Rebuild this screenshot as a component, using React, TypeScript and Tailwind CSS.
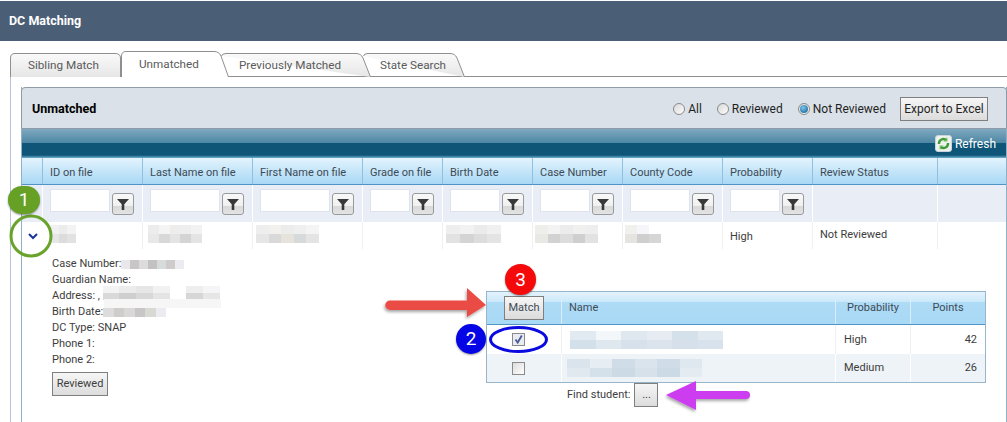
import type { FC } from 'react';

const columns = [
  { title: 'ID on file', input: 'w-[60px]', blur: { w: 'w-[26px]', top: ['#f1f1f1', '#ececec', '#f3f3f3'], bottom: ['#e6e6e6', '#dcdcdc', '#e2e2e2'] }, blurPad: 'pl-[7px]' },
  { title: 'Last Name on file', input: 'w-[70px]', blur: { w: 'w-[54px]', top: ['#ececec', '#f4f4f4', '#efedeb', '#eeeeee', '#f2f2f2'], bottom: ['#e8e8e8', '#d8d8d8', '#e4e4e4', '#d4d4d4', '#e4e4e4'] }, blurPad: 'pl-[5px]' },
  { title: 'First Name on file', input: 'w-[70px]', blur: { w: 'w-[63px]', top: ['#eeeeee', '#f3f1ee', '#ececec', '#efefef', '#f4f4f4'], bottom: ['#e6e6e6', '#d9d9d9', '#e6e2dc', '#d6dadb', '#e4e4e4'] }, blurPad: 'pl-[3px]' },
  { title: 'Grade on file', input: 'w-[40px]' },
  { title: 'Birth Date', input: 'w-[50px]', blur: { w: 'w-[55px]', top: ['#eeeeee', '#f2f2f2', '#ebebeb', '#f0f0f0'], bottom: ['#e2e2e2', '#d4d4d4', '#dddddd', '#e4e4e4'] }, blurPad: 'pl-[3px]' },
  { title: 'Case Number', input: 'w-[50px]', blur: { w: 'w-[63px]', top: ['#eeeeea', '#f3f3f3', '#ececec', '#f0f0ee', '#eeeeee'], bottom: ['#e8e8e4', '#d2d2d2', '#dcdcdc', '#cfcfcf', '#e2e2e2'] }, blurPad: 'pl-[2px]' },
  { title: 'County Code', input: 'w-[60px]', blur: { w: 'w-[36px]', top: ['#f0f0ee', '#f6f6fa', '#ffffff'], bottom: ['#e6e4e0', '#cfcfcf', '#d6d6d6'] }, blurPad: 'pl-[2px]' },
  { title: 'Probability', input: 'w-[50px]' },
  { title: 'Review Status' },
  { title: '' },
];

const gridCols = 'grid grid-cols-[21px_100px_110px_110px_80px_90px_90px_100px_90px_125px_1fr]';

type BlurProps = { w: string; h?: string; top: string[]; bottom: string[]; className?: string };

// pixelated stand-in for redacted values
const Blur: FC<BlurProps> = ({ w, h = 'h-[18px]', top, bottom, className }) => (
  <div className={`flex flex-col ${w} ${h} ${className ?? ''}`}>
    {[top, bottom].map((row, r) => (
      <div key={r} className="flex flex-1">
        {row.map((c, i) => (
          <div key={i} className="flex-1" style={{ backgroundColor: c }} />
        ))}
      </div>
    ))}
  </div>
);

const FilterButton: FC = () => (
  <div className="mt-[4px] ml-[2px] flex h-[22px] w-[22px] items-center justify-center rounded-[3px] border border-[#9a9a9a] bg-[linear-gradient(#f8f8f8_0%,#f0f0f0_60%,#d8d8d8_61%,#e4e4e4_100%)]">
    <svg width="14" height="14" viewBox="0 0 14 14">
      <path d="M1 2h12L8.3 7.2V13H5.7V7.2z" fill="#383838" />
    </svg>
  </div>
);

const Radio: FC<{ label: string; checked?: boolean; className?: string }> = ({ label, checked, className }) => (
  <div className={`flex items-center gap-[3px] ${className ?? ''}`}>
    <div className="flex h-[12px] w-[12px] items-center justify-center rounded-full border border-[#8a8a8a] bg-[linear-gradient(135deg,#d8d8d8,#fdfdfd)]">
      {checked && <div className="h-[8px] w-[8px] rounded-full bg-[radial-gradient(circle_at_40%_35%,#7cc4ec,#0b5a8f)]" />}
    </div>
    <span>{label}</span>
  </div>
);

const Tab: FC<{ label: string; d: string; active?: boolean; className: string; textClass: string }> = ({ label, d, active, className, textClass }) => (
  <div className={`relative ${className}`}>
    <svg className="absolute inset-0 h-full w-full" preserveAspectRatio="none">
      <defs>
        <linearGradient id="tabfill" x1="0" y1="0" x2="0" y2="1">
          <stop offset="0" stopColor="#fafafa" />
          <stop offset="1" stopColor="#e6e6e6" />
        </linearGradient>
      </defs>
      <path d={d} fill={active ? '#ffffff' : 'url(#tabfill)'} stroke="#8f8f8f" />
    </svg>
    <span className={`absolute ${textClass}`}>{label}</span>
  </div>
);

const PlainButton: FC<{ label: string; className: string }> = ({ label, className }) => (
  <div className={`flex items-center justify-center border border-[#7f7f7f] bg-[linear-gradient(#f6f6f6,#dcdcdc)] ${className}`}>{label}</div>
);

const Detail: FC = () => (
  <div className="ml-[30px] flex w-[340px] shrink-0 flex-col pt-[7px] text-[11px] text-[#3d3d3d]">
    <div className="flex h-[16px] items-center">Case Number:<Blur w="w-[63px]" h="h-[9px]" top={['#e8e8ec', '#c9c6c6', '#dcdcdc', '#c4c1c1', '#d8dbdb', '#cfcbcb', '#ebebf0']} bottom={['#e8e8ec', '#c9c6c6', '#dcdcdc', '#c4c1c1', '#d8dbdb', '#cfcbcb', '#ebebf0']} /></div>
    <div className="flex h-[16px] items-center">Guardian Name:</div>
    <div className="relative flex h-[16px] items-center">
      Address: ,&nbsp;
      <Blur w="w-[117px]" h="h-[14px]" className="mb-[7px]" top={['#f3f3f3', '#ececec', '#e6e6e6', '#f1f1f1', '#ffffff', '#eeeeee', '#f5f5f8']} bottom={['#d9d9d9', '#cfcfcf', '#d8d8d8', '#e4e4e4', '#ffffff', '#d6d6d6', '#e6e6e6']} />
      <div className="absolute left-[52px] top-[11px] h-[9px] w-[117px] bg-[#f6f6f6]" />
    </div>
    <div className="flex h-[16px] items-center">Birth Date:<Blur w="w-[63px]" h="h-[9px]" top={['#dcdcdc', '#cfcccc', '#d8d8d8', '#c8c6c6', '#d8d8d4', '#ebebf0']} bottom={['#dcdcdc', '#cfcccc', '#d8d8d8', '#c8c6c6', '#d8d8d4', '#ebebf0']} /></div>
    <div className="flex h-[16px] items-center">DC Type: SNAP</div>
    <div className="flex h-[16px] items-center">Phone 1:</div>
    <div className="flex h-[16px] items-center">Phone 2:</div>
    <PlainButton label="Reviewed" className="mt-[4px] h-[24px] w-[56px]" />
  </div>
);

const matchCols = 'grid grid-cols-[75px_274px_75px_1fr]';

const MatchTable: FC = () => (
  <div className="flex w-[500px] shrink-0 flex-col text-[11px]">
    <div className="flex flex-col border border-[#97b6cc]">
      <div className={`${matchCols} h-[33px] border-b border-[#4f94c4] bg-[linear-gradient(#e4f3fc_0%,#cbe8fa_30%,#aedbf6_31%,#a8d9f5_100%)] text-[#3d4a55]`}>
        <div className="flex items-center justify-center border-r border-[#d8eefb]">
          <PlainButton label="Match" className="h-[24px] w-[40px]" />
        </div>
        <div className="flex items-center border-r border-[#d8eefb] pl-[7px]">Name</div>
        <div className="flex items-center justify-center border-r border-[#d8eefb]">Probability</div>
        <div className="flex items-center justify-center">Points</div>
      </div>
      <div className={`${matchCols} h-[29px] text-[#3d3d3d]`}>
        <div className="flex items-center justify-center border-r border-[#f0f0f0] pr-[12px]">
          <div className="flex h-[13px] w-[13px] items-center justify-center border border-[#8a8a8a] bg-[#e8ecf2]">
            <svg width="11" height="11" viewBox="0 0 11 11"><path d="M2.5 5.5l2.2 3L8.8 1.5" fill="none" stroke="#4a5a94" strokeWidth="1.8" /></svg>
          </div>
        </div>
        <div className="flex items-center border-r border-[#f0f0f0] pl-[8px]">
          <Blur w="w-[153px]" top={['#e2eaf1', '#f4f7fa', '#dfe7ef', '#e6ecf2', '#d4e0ea', '#e0e8f0']} bottom={['#d3dfe9', '#dfe7ef', '#d6e1eb', '#dbe4ed', '#d5e0ea', '#d8e2ec']} />
        </div>
        <div className="flex items-center border-r border-[#f0f0f0] pl-[8px]">High</div>
        <div className="flex items-center justify-end pr-[8px]">42</div>
      </div>
      <div className={`${matchCols} h-[28px] bg-[#eef3f8] text-[#3d3d3d]`}>
        <div className="flex items-center justify-center border-r border-white pr-[12px]">
          <div className="h-[13px] w-[13px] border border-[#8a8a8a] bg-[linear-gradient(135deg,#dcdcdc,#ffffff)]" />
        </div>
        <div className="flex items-center border-r border-white pl-[5px]">
          <Blur w="w-[135px]" top={['#d9e4ed', '#e6edf3', '#d0dde8', '#dae4ec', '#d0dde9', '#dfe8ef']} bottom={['#e1e9f0', '#d4e0ea', '#ccdae6', '#d6e1ea', '#ccdae6', '#e4ecf2']} />
        </div>
        <div className="flex items-center border-r border-white pl-[8px]">Medium</div>
        <div className="flex items-center justify-end pr-[8px]">26</div>
      </div>
    </div>
    <div className="ml-[81px] flex items-center gap-[4px] text-[#3d3d3d]">
      <span>Find student:</span>
      <PlainButton label="..." className="h-[24px] w-[24px]" />
    </div>
  </div>
);

// numbered callouts and arrows drawn on top of the screenshot
const Annotations: FC = () => (
  <>
    <svg className="pointer-events-none absolute left-0 top-0" width="1007" height="422">
      <defs>
        <filter id="sh" x="-20%" y="-40%" width="140%" height="180%">
          <feDropShadow dx="-1" dy="2" stdDeviation="1.5" floodColor="#000" floodOpacity="0.35" />
        </filter>
      </defs>
      <circle cx="31" cy="236" r="20" fill="none" stroke="#6aa32b" strokeWidth="3" />
      <ellipse cx="518.5" cy="339.5" rx="28" ry="12" fill="none" stroke="#0a0ae0" strokeWidth="3" />
      <path d="M390 300.5H467V288L486 305L467 317V310H390a4.5 4.5 0 0 1 0-9.5z" fill="#ea4c44" filter="url(#sh)" />
      <path d="M746 391H696V381L666 395L696 410V399H746a4 4 0 0 0 0-8z" fill="#cc3cf0" filter="url(#sh)" />
    </svg>
    <div className="absolute left-[8px] top-[186px] flex h-[28px] w-[32px] items-center justify-center rounded-full bg-[#66a125] text-[19px] text-white shadow-[0_1px_2px_rgba(0,0,0,0.4)]">1</div>
    <div className="absolute left-[456px] top-[324px] flex h-[30px] w-[30px] items-center justify-center rounded-full bg-[#0505e6] text-[19px] text-white shadow-[0_1px_2px_rgba(0,0,0,0.4)]">2</div>
    <div className="absolute left-[505px] top-[264px] flex h-[31px] w-[31px] items-center justify-center rounded-full bg-[#f40a0a] text-[19px] text-white shadow-[0_1px_2px_rgba(0,0,0,0.4)]">3</div>
  </>
);

export default function App() {
  return (
    <div className="relative h-[422px] w-[1007px] overflow-hidden bg-white font-['Roboto',sans-serif] text-[12px] leading-[16px]">
      <div className="mt-px flex h-[40px] items-center bg-[#4a5e76] pl-[9px] text-[12.5px] font-bold text-white">DC Matching</div>

      {/* tabs */}
      <div className="mt-[10px] flex h-[26px] pl-[10px] text-[11.7px] text-[#5a5a5a]">
        <Tab label="Sibling Match" className="z-10 mt-[2px] h-[24px] w-[111px]" textClass="left-[18px] top-[4px]" d="M0.5 24V5Q0.5 0.5 5 0.5H105Q110.5 0.5 110.5 5V24" />
        <Tab active label="Unmatched" className="z-30 h-[26px] w-[108px]" textClass="left-[18px] top-[5px]" d="M0.5 26V5Q0.5 0.5 5 0.5H93Q98 0.5 100 5L107.5 26" />
        <Tab label="Previously Matched" className="z-20 -ml-[8px] mt-[2px] h-[24px] w-[150px]" textClass="left-[18px] top-[4px]" d="M0.5 3Q1 0.5 5 0.5H135Q140 0.5 142 5L149.5 24" />
        <Tab label="State Search" className="z-10 -ml-[8px] mt-[2px] h-[24px] w-[102px]" textClass="left-[17px] top-[4px]" d="M0.5 3Q1 0.5 5 0.5H87Q92 0.5 94 5L101.5 24" />
      </div>

      {/* tab body */}
      <div className="-mt-px ml-[10px] h-[346px] border-l border-t border-l-[#b7c6d6] border-t-[#8f8f8f] pl-[10px] pt-[10px]">
        <div className="h-[340px] w-[986px] border-l border-r border-[#90b0c6]">
          <div className="-ml-px -mr-px flex h-[42px] items-center rounded-t-[4px] border border-[#8f9ba6] bg-[#dae1e8] pl-[10px] pr-[18px] pt-[1px] text-[#1f1f1f]">
            <span className="text-[12.5px] font-bold text-black">Unmatched</span>
            <div className="ml-auto flex items-center">
              <Radio label="All" />
              <Radio label="Reviewed" className="ml-[15px]" />
              <Radio label="Not Reviewed" checked className="ml-[15px]" />
              <PlainButton label="Export to Excel" className="ml-[14px] h-[24px] w-[88px]" />
            </div>
          </div>

          {/* command bar */}
          <div className="flex h-[29px] items-center justify-end bg-[linear-gradient(#7fa9c0_0%,#4d87a4_48%,#0e5578_49%,#0e5578_90%,#6fb0cf_100%)] pr-[10px] text-white">
            <div className="mr-[3px] flex h-[17px] w-[17px] items-center justify-center rounded-[3px] border border-[#c8d4d8] bg-[#eef2ee]">
              <svg width="13" height="13" viewBox="0 0 13 13" fill="none" stroke="#3f9a3a" strokeWidth="2.4">
                <path d="M2 7a4.5 4.5 0 0 1 7.5-3.8M11 6a4.5 4.5 0 0 1-7.5 3.8" />
                <path d="M9.8 0.8v3H6.8M3.2 12.2v-3h3" strokeWidth="1.2" stroke="#74bb5a" />
              </svg>
            </div>
            Refresh
          </div>

          {/* column headers */}
          <div className={`${gridCols} h-[27px] border-b border-[#4f94c4] bg-[linear-gradient(#e3f3fd,#a8d8f5)] text-[11px] text-[#3d4a55]`}>
            <div className="border-r border-[#8fc0e2]" />
            {columns.map((c, i) => (
              <div key={i} className="flex items-center border-r border-[#8fc0e2] pl-[7px] pt-[4px] last:border-r-0">{c.title}</div>
            ))}
          </div>

          {/* filter row */}
          <div className={`${gridCols} h-[37px] bg-[#e9edf5]`}>
            <div className="border-r border-white" />
            {columns.map((c, i) => (
              <div key={i} className="flex border-r border-white pl-[7px] pt-[4px] last:border-r-0">
                {c.input && (
                  <>
                    <div className={`${c.input} h-[23px] border border-[#dfe3ec] bg-white`} />
                    <FilterButton />
                  </>
                )}
              </div>
            ))}
          </div>

          {/* data row */}
          <div className={`${gridCols} h-[27px] text-[11px] text-[#3d3d3d]`}>
            <div className="flex items-center justify-center pt-[2px]">
              <svg width="10" height="7" viewBox="0 0 10 7"><path d="M1 1l4 4 4-4" fill="none" stroke="#17379a" strokeWidth="2" /></svg>
            </div>
            {columns.map((c, i) => (
              <div key={i} className={`border-r border-[#f0f0f0] pt-[3px] last:border-r-0 ${c.blurPad ?? ''}`}>
                {c.blur && <Blur {...c.blur} />}
                {c.title === 'Probability' && <div className="pl-[7px] pt-[4px]">High</div>}
                {c.title === 'Review Status' && <div className="pl-[7px] pt-[2px]">Not Reviewed</div>}
              </div>
            ))}
          </div>

          {/* expanded detail */}
          <div className="flex">
            <Detail />
            <div className="ml-[94px] pt-[42px]">
              <MatchTable />
            </div>
          </div>
        </div>
      </div>

      <Annotations />
    </div>
  );
}
